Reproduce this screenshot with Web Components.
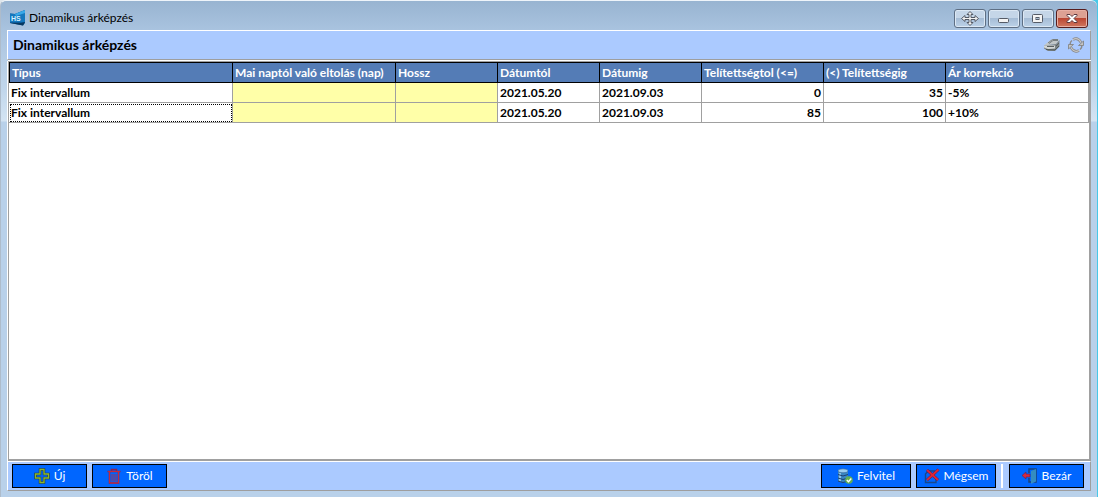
<!DOCTYPE html>
<html lang="hu">
<head>
<meta charset="utf-8">
<title>Dinamikus árképzés</title>
<style>
  html, body { height: 100%; margin: 0; }
  body { background: linear-gradient(90deg, #dfe6ec 50%, #48c8e8 50%); font: 12px/16px Lato, "Open Sans", sans-serif; color: #000; overflow: hidden; }
</style>
</head>
<body>
<app-window heading="Dinamikus árképzés">
  <tool-header slot="header" heading="Dinamikus árképzés"></tool-header>
  <pricing-grid></pricing-grid>
  <action-bar slot="footer">
    <action-button icon="plus">Új</action-button>
    <action-button icon="trash">Töröl</action-button>
    <action-button slot="end" icon="database" wide>Felvitel</action-button>
    <action-button slot="end" icon="cancel" medium>Mégsem</action-button>
    <action-button slot="exit" icon="exit">Bezár</action-button>
  </action-bar>
</app-window>

<script>
const define = (name, html, setup) => customElements.define(name, class extends HTMLElement {
  connectedCallback() {
    if (this.shadowRoot) return;
    const root = this.attachShadow({ mode: 'open' });
    root.innerHTML = html;
    if (setup) setup(root, this);
  }
});

define('app-window', `
<style>
  :host { display: flex; flex-direction: column; box-sizing: border-box; height: 100vh; margin-right: 1px;
    padding: 0 6px 6px; border-left: 1px solid #aebccb; border-top: 1px solid #eef4fa; border-radius: 6px 6px 0 0;
    background: linear-gradient(#98b4d1, #a9c3df 29px, #c2d7ec 90px, #d4e4f3 120px, #b9d1ea 121px); }
  header { display: flex; align-items: center; flex: none; height: 29px; box-sizing: border-box; padding: 5px 3px 0 2px; }
  h1 { flex: 1; margin: 0 0 0 3px; font-size: 12px; font-weight: 400; }
  .logo { display: block; }
  nav { display: flex; gap: 2px; }
  nav button { width: 32px; height: 19px; padding: 0; border: 1px solid #5e6f84; border-radius: 3px;
    box-shadow: inset 0 0 0 1px #dce8f4; background: linear-gradient(#c5d6e8 47%, #a6bdd6 50%, #bcd2e8); }
  nav button.close { border-color: #571d1d; box-shadow: inset 0 0 0 1px #e8b0a4; background: linear-gradient(#dda193 47%, #bb4733 50%, #d07860); }
  nav svg { display: block; margin: 0 auto; }
  main { display: flex; flex: 1; min-height: 0; flex-direction: column; }
</style>
<header>
  <svg class="logo" width="17" height="16" viewBox="0 0 17 16"><path d="M1 3.500 6 4l10-4v13l-2 2.500L1 13z" fill="#0a5c9c"/><path d="M1 3.500 6 4l10-4v12L1 12z" fill="#1477bd"/><path d="M6 4l10-4v3L7 6z" fill="#38a8e8"/><path d="M1 13h11l4-1-2 3.500z" fill="#083860"/><text x="2" y="11" font-family="Liberation Sans" font-size="7" font-weight="700" fill="#d5f0ff">HS</text></svg>
  <h1></h1>
  <nav>
    <button aria-label="Mozgatás"><svg width="20" height="15" viewBox="0 0 20 15"><path d="M10 .500 13 3.500h-2V6.500h4V4.500l3.500 3-3.500 3V8.500h-4v3h2l-3 3-3-3h2v-3H5v2l-3.500-3 3.500-3v2h4v-3H7z" fill="#f2f2f2" stroke="#555b66"/></svg></button>
    <button aria-label="Kis méret"><svg width="12" height="11"><rect x=".5" y="5.500" width="10" height="4" rx="1" fill="#f4f4f4" stroke="#555b66"/></svg></button>
    <button aria-label="Teljes méret"><svg width="12" height="11"><rect x=".5" y="1.500" width="10" height="8" rx="1" fill="#f4f4f4" stroke="#555b66"/><rect x="4" y="4.500" width="3" height="2" fill="#aabccf" stroke="#555b66"/></svg></button>
    <button class="close" aria-label="Bezárás"><svg width="12" height="11" viewBox="0 0 12 11"><path d="M1 1.500h3l2 2 2-2h3v1L8 5.500l3 3v1H8l-2-2-2 2H1v-1l3-3-3-3z" fill="#fff" stroke="#5b3a40"/></svg></button>
  </nav>
</header>
<main><slot name="header"></slot><slot></slot><slot name="footer"></slot></main>`,
(root, el) => { root.querySelector('h1').textContent = el.getAttribute('heading'); });

define('tool-header', `
<style>
  :host { display: flex; align-items: center; gap: 8px; flex: none; box-sizing: border-box; height: 30px; padding: 0 6px 0 5px;
    background: #abcaff; border: 1px solid #fff; border-right-color: #9e9e9e; border-bottom-color: #9e9e9e; }
  h2 { flex: 1; margin: 0; font-size: 14px; line-height: 18px; }
  button { padding: 0; border: 0; background: none; }
  svg { display: block; }
</style>
<h2></h2>
<button aria-label="Nyomtatás"><svg width="16" height="16" viewBox="0 0 16 16"><path d="M0 8.500 7 2.500h8.500L12 7z" fill="#c2c7c8"/><path d="M4 6l4.500-3.500h5.500M5 6.500 9 3.500h5" fill="none" stroke="#777e80"/><path d="M0 8.500 12 7l3.500-4v6.500L11 14H4l-4-2.500z" fill="#7e8586"/><path d="M0 8.500h11v3L4 12l-4-1.500z" fill="#d2d6d6"/><path d="M3 9.500h7M12 9l3-3" stroke="#5a6163"/><path d="M2 12.500 11 13l4-4" fill="none" stroke="#4f595a"/></svg></button>
<button aria-label="Frissítés"><svg width="16" height="16" viewBox="0 0 16 16" fill="none"><path d="M5 2.500Q10 0 13 5.500M11 13.500Q6 16 3 10.500" stroke="#858585" stroke-width="2.600"/><path d="M5 2.500Q10 0 13 5.500M11 13.500Q6 16 3 10.500" stroke="#c8c8c8" stroke-width="1.200"/><path d="M3 9.500Q1 6 4 3.500M13 6.500Q15 10 12 12.500" stroke="#8b8b8b" stroke-width="1.400"/><path d="M15.500 4v4.500H10.500zM.500 12V7.500h5z" fill="#c4c4c4" stroke="#7d7d7d" stroke-width=".8"/></svg></button>`,
(root, el) => { root.querySelector('h2').textContent = el.getAttribute('heading'); });

define('pricing-grid', `
<style>
  :host { display: block; flex: 1; min-height: 0; box-sizing: border-box; margin: 1px 0 0 1px; overflow: hidden; background: #fff;
    border: solid #a0a0a0; border-width: 1px 2px 2px 1px; box-shadow: -1px 0 #fff, 0 -1px #fff; }
  table { width: 100%; table-layout: fixed; border-collapse: separate; border-spacing: 0; font-weight: 700; }
  th, td { box-sizing: border-box; height: 20px; padding: 0 2px; border: solid #a0a0a0; border-width: 0 1px 1px 0;
    text-align: left; line-height: 16px; white-space: nowrap; overflow: hidden; }
  th { height: 21px; background: #547cb6; color: #fff; border-color: #000; border-top-width: 1px; }
  th:first-child { border-left-width: 1px; }
  .type { width: 224px; } .offset { width: 163px; } .short { width: 102px; } .load { width: 122px; }
  .empty { background: #ffffa8; }
  .num { text-align: right; }
  .focus { outline: 1px dotted #000; outline-offset: -2px; }
</style>
<table>
  <thead><tr><th class="type">Típus</th><th class="offset">Mai naptól való eltolás (nap)</th><th class="short">Hossz</th><th class="short">Dátumtól</th><th class="short">Dátumig</th><th class="load">Telítettségtol (&lt;=)</th><th class="load">(&lt;) Telítettségig</th><th>Ár korrekció</th></tr></thead>
  <tbody>
    <tr><td>Fix intervallum</td><td class="empty"></td><td class="empty"></td><td>2021.05.20</td><td>2021.09.03</td><td class="num">0</td><td class="num">35</td><td>-5%</td></tr>
    <tr><td class="focus">Fix intervallum</td><td class="empty"></td><td class="empty"></td><td>2021.05.20</td><td>2021.09.03</td><td class="num">85</td><td class="num">100</td><td>+10%</td></tr>
  </tbody>
</table>`);

define('action-bar', `
<style>
  :host { display: flex; flex: none; box-sizing: border-box; height: 30px; padding: 2px 6px 2px 4px; background: #abcaff;
    border: 1px solid #fff; border-right-color: #9e9e9e; border-bottom-color: #9e9e9e; }
  div { display: flex; gap: 5px; }
  .end { margin-left: auto; }
  hr { width: 0; height: 24px; margin: 0 6px 0 5px; border: solid; border-width: 0 1px; border-color: #a0a0a0 #fff; }
</style>
<div><slot></slot></div><div class="end"><slot name="end"></slot></div><hr><slot name="exit"></slot>`);

const icons = {
  plus: '<path d="M6 1.500h4v4.500h4.500v4H10v4.500H6V10H1.500V6H6z" fill="none" stroke="#263b38" stroke-width="2.500"/><path d="M6 1.500h4v4.500h4.500v4H10v4.500H6V10H1.500V6H6z" fill="none" stroke="#8ab82e" stroke-width="1.300"/>',
  trash: '<path d="M1.500 3.500h13M5.500 3V1.500h5V3M3.500 4v11h9V4" fill="none" stroke="#8c2350" stroke-width="1.600"/><path d="M2 3.500h12M3.500 4v11h9V4" fill="none" stroke="#c42a40"/><path d="M6 6v7.500M8 6v7.500M10 6v7.500" stroke="#98305c"/>',
  database: '<path d="M1 3v10q5 3.500 10 0V3z" fill="#3a86c4"/><path d="M3 5v9" stroke="#8cc4ea" stroke-width="2"/><ellipse cx="6" cy="2.800" rx="5" ry="2" fill="#9ccdf0" stroke="#2b5c92" stroke-width=".6"/><path d="M1 6.500q5 3 10 0M1 10q5 3 10 0M1 13q5 3 10 0" fill="none" stroke="#1b3f70"/><circle cx="12" cy="12" r="3.800" fill="#62ae52"/><path d="M9.800 12l1.700 1.700 2.800-3.200" fill="none" stroke="#fff" stroke-width="1.400"/>',
  cancel: '<path d="M11 3H4L1.500 6v8.500H12V11" fill="none" stroke="#17478c" stroke-width="1.400"/><path d="M3 2l11 10M14.500 1.500 3 12" stroke="#611a46" stroke-width="2.800"/><path d="M3 2l11 10M14.500 1.500 3 12" stroke="#dc2638" stroke-width="1.800"/>',
  exit: '<path d="M7 5V1h7v13h-3M7 10v4h3" fill="none" stroke="#18437a" stroke-width="1.500"/><path d="M9 3l5-2v12.500L9 16z" fill="#348cc0"/><path d="M0 7.500 4 4v2h4v3H4v2z" fill="#d32940" stroke="#68204c" stroke-width=".6"/>'
};
define('action-button', `
<style>
  :host { display: block; width: 75px; }
  :host([wide]) { width: 90px; }
  :host([medium]) { width: 80px; }
  button { display: flex; align-items: center; justify-content: center; gap: 4px; box-sizing: border-box; width: 100%; height: 24px;
    padding: 0; border: 1px solid #000; background: #0066ff; color: #fff; font: inherit; }
</style>
<button><svg width="16" height="16" viewBox="0 0 16 16"></svg><slot></slot></button>`,
(root, el) => { root.querySelector('svg').innerHTML = icons[el.getAttribute('icon')]; });
</script>
</body>
</html>
